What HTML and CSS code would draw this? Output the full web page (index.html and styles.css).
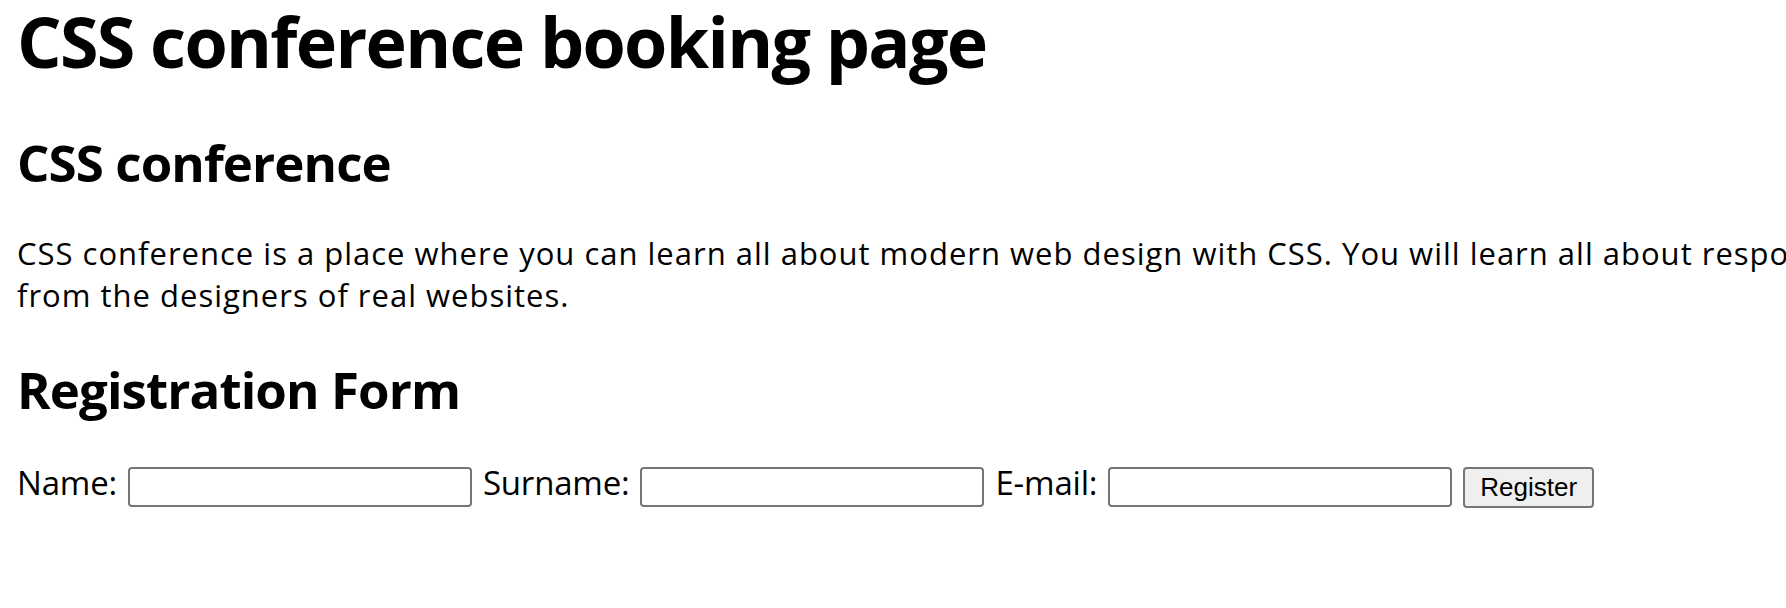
FILE: index.html
```html
<!DOCTYPE html>
<html lang="en">
<head>
<meta charset="utf-8">
<title>CSS conference booking page</title>
<link rel="stylesheet" href="styles.css">
</head>
<body>
<main class="page">
  <h1 class="title">CSS conference booking page</h1>
  <section class="about">
    <h2 class="section-title">CSS conference</h2>
    <p class="intro">CSS conference is a place where you can learn all about modern web design with CSS. You will learn all about responsive design and layout<br>from the designers of real websites.</p>
  </section>
  <section class="register">
    <h2 class="section-title section-title--form">Registration Form</h2>
    <form class="form" onsubmit="return false;">
      <label class="label" for="name">Name:</label>
      <input class="field" id="name" type="text">
      <label class="label" for="surname">Surname:</label>
      <input class="field" id="surname" type="text">
      <label class="label" for="email">E-mail:</label>
      <input class="field" id="email" type="email">
      <button class="btn" type="submit">Register</button>
    </form>
  </section>
</main>
</body>
</html>
```

FILE: styles.css
```css
html, body {
  margin: 0;
  padding: 0;
  background: #fff;
  overflow: hidden;
}

body {
  font-family: "Open Sans", "Noto Sans", sans-serif;
  color: #000;
}

.page {
  padding: 0 17px;
}

.title {
  margin: 0;
  font-size: 70px;
  line-height: 82px;
  font-weight: 700;
  letter-spacing: -1.7px;
}

.section-title {
  margin: 49px 0 0;
  font-size: 51px;
  line-height: 62px;
  font-weight: 700;
  letter-spacing: -0.9px;
}

.section-title--form {
  margin-top: 42px;
}

.intro {
  margin: 39px 0 0;
  font-size: 31px;
  line-height: 42px;
  letter-spacing: 1px;
  white-space: nowrap;
}

.form {
  margin-top: 47px;
  display: flex;
  align-items: flex-start;
  gap: 11px;
}

.label {
  font-size: 33px;
  line-height: 32px;
  letter-spacing: -0.2px;
}

.field {
  box-sizing: border-box;
  width: 344px;
  height: 40px;
  margin: 0;
  border: 2px solid #767676;
  border-radius: 4px;
  background: #fff;
  font: 25px "Liberation Sans", sans-serif;
  padding: 2px 4px;
}

.btn {
  box-sizing: border-box;
  width: 131px;
  height: 41px;
  margin: 0;
  border: 2px solid #767676;
  border-radius: 4px;
  background: #efefef;
  color: #000;
  font: 26px "Liberation Sans", Arial, sans-serif;
  padding: 0 10px;
}
```
